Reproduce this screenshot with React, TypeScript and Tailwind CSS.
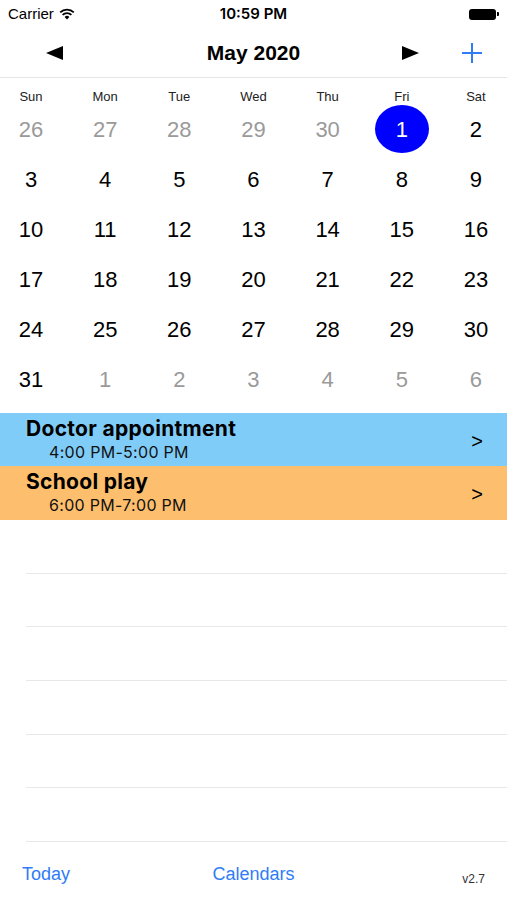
import React from "react";

const weeks: { d: number; muted?: boolean; sel?: boolean }[][] = [
  [{ d: 26, muted: true }, { d: 27, muted: true }, { d: 28, muted: true }, { d: 29, muted: true }, { d: 30, muted: true }, { d: 1, sel: true }, { d: 2 }],
  [{ d: 3 }, { d: 4 }, { d: 5 }, { d: 6 }, { d: 7 }, { d: 8 }, { d: 9 }],
  [{ d: 10 }, { d: 11 }, { d: 12 }, { d: 13 }, { d: 14 }, { d: 15 }, { d: 16 }],
  [{ d: 17 }, { d: 18 }, { d: 19 }, { d: 20 }, { d: 21 }, { d: 22 }, { d: 23 }],
  [{ d: 24 }, { d: 25 }, { d: 26 }, { d: 27 }, { d: 28 }, { d: 29 }, { d: 30 }],
  [{ d: 31 }, { d: 1, muted: true }, { d: 2, muted: true }, { d: 3, muted: true }, { d: 4, muted: true }, { d: 5, muted: true }, { d: 6, muted: true }],
];

const days = ["Sun", "Mon", "Tue", "Wed", "Thu", "Fri", "Sat"];

const events = [
  { title: "Doctor appointment", time: "4:00 PM-5:00 PM", bg: "bg-[#80ccf9]", h: "h-[53px]" },
  { title: "School play", time: "6:00 PM-7:00 PM", bg: "bg-[#fdbf6e]", h: "h-[54px]" },
];

function StatusBar() {
  return (
    <div className="relative h-[28px] flex items-center justify-between px-[8px] text-[15px] text-black">
      <div className="flex items-center gap-[5px]">
        <span>Carrier</span>
        <svg width="16" height="12" viewBox="0 0 16 12">
          <path d="M8 11.5 L5.6 8.9 A3.4 3.4 0 0 1 10.4 8.9 Z" fill="black" />
          <path d="M3.6 6.9 A6.2 6.2 0 0 1 12.4 6.9" stroke="black" strokeWidth="1.8" fill="none" />
          <path d="M1.2 4.4 A9.6 9.6 0 0 1 14.8 4.4" stroke="black" strokeWidth="1.8" fill="none" />
        </svg>
      </div>
      <span className="absolute left-1/2 -translate-x-1/2 font-semibold" style={{ fontFamily: "Inter, sans-serif" }}>10:59 PM</span>
      <div className="flex items-center">
        <div className="w-[27px] h-[11px] rounded-[3px] bg-black" />
        <div className="w-[2px] h-[4px] bg-black rounded-r-[1px] ml-[1px]" />
      </div>
    </div>
  );
}

function NavBar() {
  return (
    <div className="relative h-[50px] flex items-center border-b border-[#e4e4e4]">
      <svg className="absolute left-[46px] top-[18px]" width="18" height="14" viewBox="0 0 18 14">
        <path d="M0 7 L17 0 L17 14 Z" fill="black" />
      </svg>
      <span className="absolute left-1/2 -translate-x-1/2 text-[21px] font-semibold">May 2020</span>
      <svg className="absolute left-[401px] top-[18px]" width="18" height="14" viewBox="0 0 18 14">
        <path d="M18 7 L1 0 L1 14 Z" fill="black" />
      </svg>
      <svg className="absolute left-[461px] top-[14px]" width="22" height="22" viewBox="0 0 22 22">
        <path d="M11 1 V21 M1 11 H21" stroke="#2f7cf6" strokeWidth="2" />
      </svg>
    </div>
  );
}

export default function App() {
  return (
    <div className="w-[507px] h-[900px] bg-white flex flex-col overflow-hidden" style={{ fontFamily: '"Liberation Sans", Arial, sans-serif' }}>
      <StatusBar />
      <NavBar />
      <div className="flex justify-between px-[6px] pt-[11px] text-[13px] leading-[15px] text-[#222]">
        {days.map((d) => (
          <div key={d} className="w-[50px] text-center">{d}</div>
        ))}
      </div>
      <div className="flex flex-col">
        {weeks.map((w, i) => (
          <div key={i} className="flex justify-between px-[6px] h-[50px] items-center">
            {w.map((c, j) => (
              <div key={j} className="w-[50px] flex justify-center">
                {c.sel ? (
                  <div className="w-[54px] h-[48px] shrink-0 rounded-[50%] bg-[#0000ff] flex items-center justify-center text-white text-[22px]">
                    {c.d}
                  </div>
                ) : (
                  <span className={`text-[22px] ${c.muted ? "text-[#9a9a9a]" : "text-black"}`}>{c.d}</span>
                )}
              </div>
            ))}
          </div>
        ))}
      </div>
      <div className="h-[9px]" />
      {events.map((e) => (
        <div key={e.title} className={`${e.bg} ${e.h} flex items-center pl-[26px] pr-[24px]`}>
          <div className="flex-1 flex flex-col" style={{ fontFamily: "Inter, sans-serif" }}>
            <span className="text-[21px] font-bold leading-[22px] tracking-[0.3px] text-black">{e.title}</span>
            <span className="text-[16px] leading-[20px] mt-[2px] pl-[23px] tracking-[0.3px] text-[#111]">{e.time}</span>
          </div>
          <span className="text-[20px] mt-[2px] text-black">&gt;</span>
        </div>
      ))}
      <div className="flex flex-col pl-[26px]">
        {[0, 1, 2, 3, 4, 5].map((i) => (
          <div key={i} className="h-[53.67px] border-b border-[#e8e8e8]" />
        ))}
      </div>
      <div className="relative flex-1">
        <span className="absolute left-[22px] top-[19px] text-[18px] text-[#2f7cf6]">Today</span>
        <span className="absolute left-1/2 -translate-x-1/2 top-[19px] text-[18px] text-[#2f7cf6]">Calendars</span>
        <span className="absolute right-[22px] top-[28px] text-[12px] text-[#333]">v2.7</span>
      </div>
    </div>
  );
}
